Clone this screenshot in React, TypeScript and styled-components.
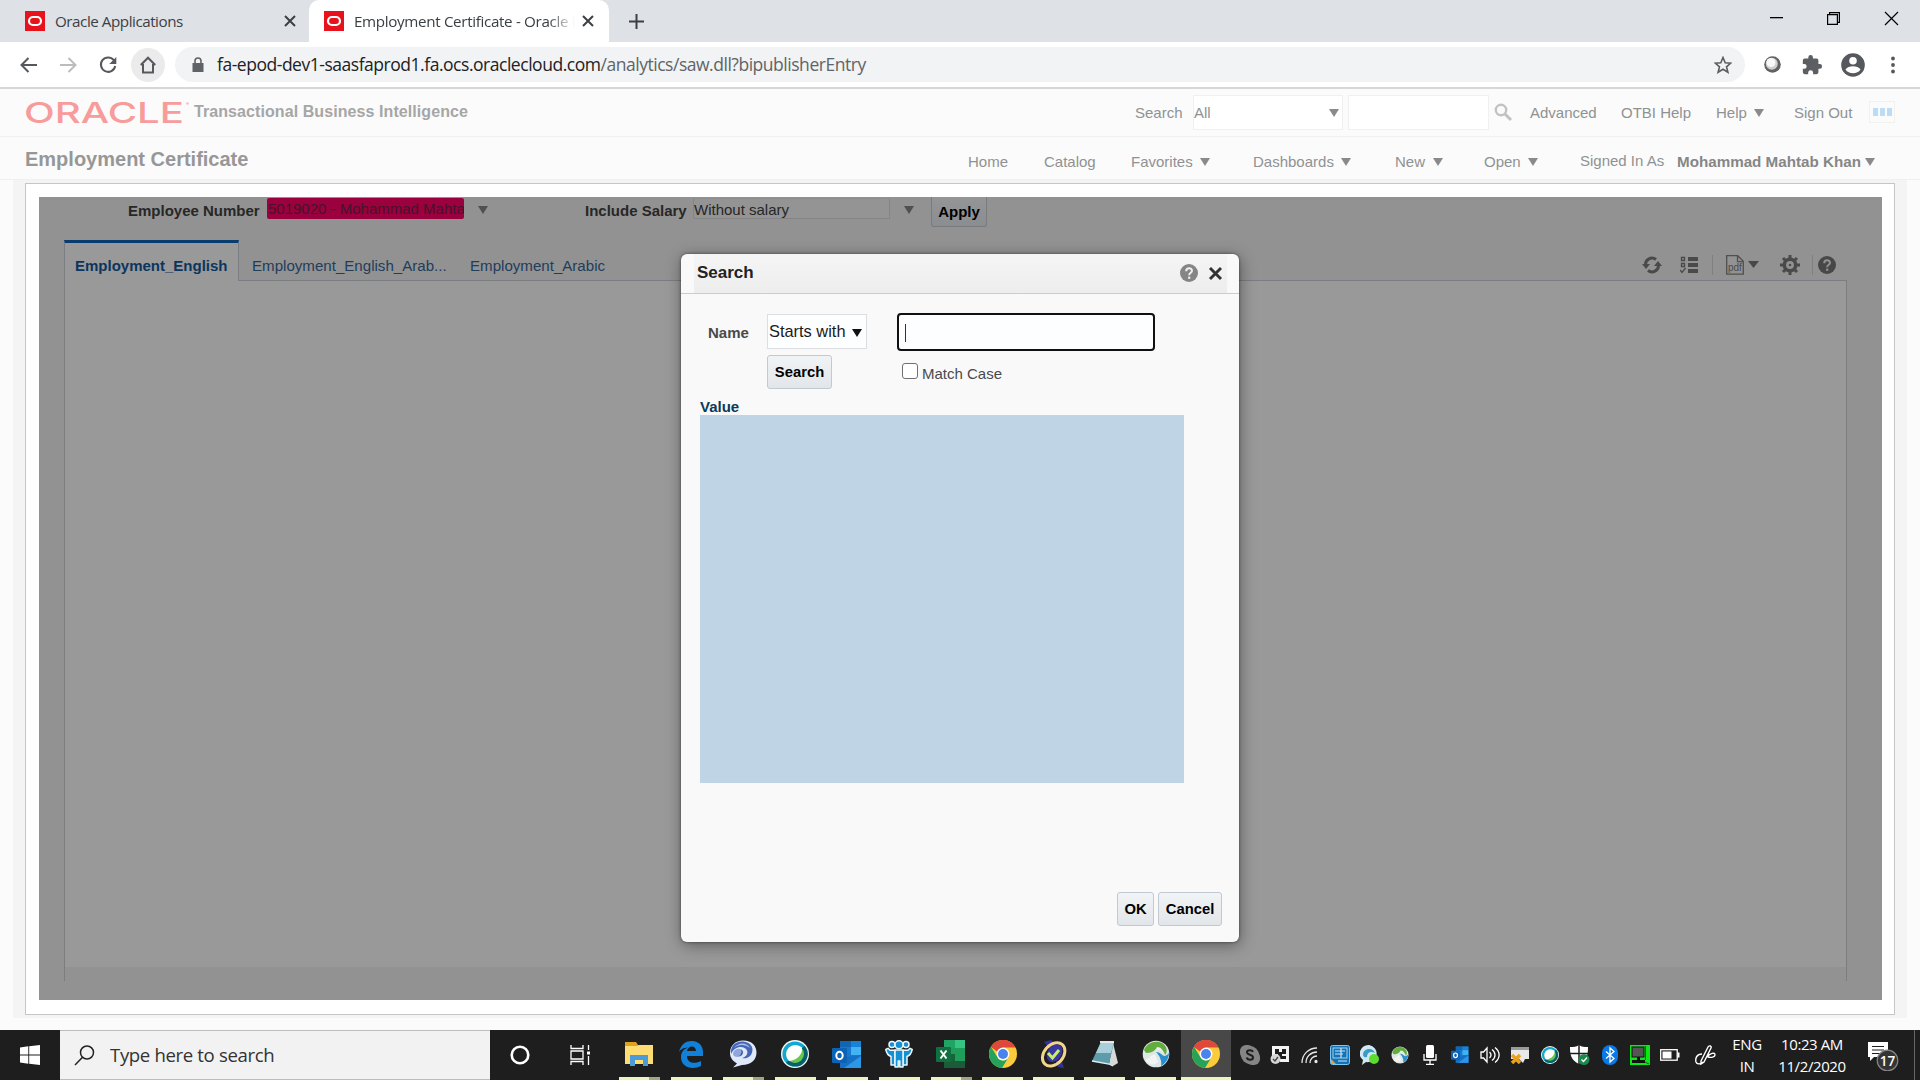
import React from "react";
import styled, { createGlobalStyle } from "styled-components";

const Global = createGlobalStyle`
  * { box-sizing: border-box; }
  body { margin: 0; background: #fafafa; overflow: hidden; }
  svg { display: block; flex: none; }
`;

const arial = `"Liberation Sans", Arial, sans-serif`;
const segoe = `"Open Sans", "Segoe UI", sans-serif`;

const Screen = styled.div`
  width: 1920px;
  height: 1080px;
  display: flex;
  flex-direction: column;
  position: relative;
  font-family: ${arial};
`;

/* ---------- generic slots ---------- */
const Slot = styled.div<{ $w: number; $center?: boolean }>`
  flex: 0 0 ${(p) => p.$w}px;
  width: ${(p) => p.$w}px;
  display: flex;
  align-items: center;
  justify-content: ${(p) => (p.$center ? "center" : "flex-start")};
  white-space: nowrap;
`;
const Spacer = styled.div`
  flex: 1;
`;

/* ---------- browser chrome ---------- */
const TabStrip = styled.div`
  height: 42px;
  flex: none;
  background: #dee1e6;
  display: flex;
  font-family: ${segoe};
`;
const Tab = styled.div<{ $active?: boolean; $w: number }>`
  width: ${(p) => p.$w}px;
  height: 42px;
  padding: 0 ${(p) => (p.$active ? 8 : 10)}px 0 ${(p) => (p.$active ? 15 : 25)}px;
  display: flex;
  align-items: center;
  background: ${(p) => (p.$active ? "#fff" : "transparent")};
  border-radius: 10px 10px 0 0;
`;
const TabTitle = styled.div<{ $fade?: boolean }>`
  margin-left: 10px;
  padding-bottom: 1px;
  flex: 1;
  overflow: hidden;
  white-space: nowrap;
  font-size: 15.2px;
  line-height: 22px;
  letter-spacing: ${(p) => (p.$fade ? -0.34 : -0.46)}px;
  color: #3c4043;
  ${(p) => p.$fade && "-webkit-mask-image: linear-gradient(90deg, #000 88%, transparent 100%);"}
`;
const WindowButtons = styled.div`
  display: flex;
  margin-left: auto;
  height: 36px;
  align-items: center;
`;
const Toolbar = styled.div`
  height: 47px;
  flex: none;
  background: #fff;
  border-bottom: 2px solid #d6d7d9;
  display: flex;
  align-items: center;
  padding: 0 8px 0 11px;
`;
const RoundButton = styled.div<{ $on?: boolean }>`
  width: 34px;
  height: 34px;
  margin-right: 6px;
  border-radius: 50%;
  background: ${(p) => (p.$on ? "#ebebec" : "transparent")};
  display: flex;
  align-items: center;
  justify-content: center;
`;
const Omnibox = styled.div`
  width: 1570px;
  height: 35px;
  margin-left: 4px;
  border-radius: 18px;
  background: #f1f3f4;
  display: flex;
  align-items: center;
  padding: 0 11px 0 15px;
`;
const Url = styled.div`
  font-family: ${segoe};
  font-size: 17.5px;
  letter-spacing: -0.47px;
  margin-left: 11px;
  padding-bottom: 1px;
  color: #606468;
  white-space: nowrap;
  span { color: #202124; }
`;

/* ---------- application header ---------- */
const Header = styled.div`
  height: 48px;
  flex: none;
  background: #fbfbfb;
  border-bottom: 1px solid #f0f0f0;
  display: flex;
  align-items: center;
  padding: 0 0 1px 25px;
  font-size: 15px;
  color: #8f9292;
`;
const SubHeader = styled(Header)`
  height: 43px;
  padding: 6px 0 0 25px;
`;
const Product = styled.div`
  margin-left: 4px;
  font-size: 16px;
  font-weight: bold;
  letter-spacing: 0.08px;
  color: #a6a6a6;
`;
const Title = styled.div`
  font-size: 20px;
  font-weight: bold;
  color: #979797;
  margin-top: -4px;
`;
const HeadBox = styled.div<{ $w: number }>`
  width: ${(p) => p.$w}px;
  height: 35px;
  margin-right: 5px;
  background: #fff;
  border: 1px solid #f0f0f0;
  display: flex;
  align-items: center;
  justify-content: space-between;
  padding: 0 3px 0 0;
`;
const UserName = styled.span`
  font-weight: bold;
  font-size: 15.2px;
  color: #868686;
`;
const Raised = styled.span`
  padding-bottom: 2px;
`;
const AppsBox = styled.div`
  width: 26px;
  height: 22px;
  border: 1px solid #f1f1ee;
  display: flex;
  align-items: center;
  justify-content: center;
  gap: 2px;
  i { width: 5px; height: 8px; background: #bcdcf5; }
`;
const Triangle = styled.span<{ $c: string; $s?: number; $drop?: number }>`
  width: 0;
  height: 0;
  margin-top: ${(p) => p.$drop ?? 2}px;
  border-left: ${(p) => p.$s ?? 5.5}px solid transparent;
  border-right: ${(p) => p.$s ?? 5.5}px solid transparent;
  border-top: 8px solid ${(p) => p.$c};
`;

/* ---------- page body ---------- */
const PageArea = styled.div`
  flex: 1;
  padding: 0 13px 12px;
  background: #fbfbfb;
`;
const PageInset = styled.div`
  height: 838px;
  padding: 3px 12px 3px;
  background: #f4f4f4;
`;
const Panel = styled.div`
  height: 832px;
  border: 1px solid #c6c6c6;
  background: #fff;
  padding: 13px 12px 0 13px;
`;
const Dimmed = styled.div`
  height: 803px;
  background: #929292;
  padding: 0 35px 0 25px;
  display: flex;
  flex-direction: column;
`;
const Prompts = styled.div`
  height: 43px;
  display: flex;
  align-items: flex-start;
  padding-left: 64px;
  font-size: 15px;
`;
const PromptLabel = styled.div<{ $w: number }>`
  width: ${(p) => p.$w}px;
  padding-top: 5px;
  line-height: 18px;
  font-weight: bold;
  color: #272727;
  white-space: nowrap;
`;
const PromptField = styled.div<{ $error?: boolean }>`
  width: 197px;
  height: 21px;
  margin-top: 1px;
  padding-left: ${(p) => (p.$error ? 1 : 0)}px;
  overflow: hidden;
  white-space: nowrap;
  line-height: ${(p) => (p.$error ? 22 : 21)}px;
  border-radius: 2px;
  border: ${(p) => (p.$error ? "0" : "1px solid #848484")};
  border-top-color: #8e8e8e;
  background: ${(p) => (p.$error ? "#9b003f" : "#949494")};
  color: ${(p) => (p.$error ? "#451527" : "#262626")};
`;
const PromptArrow = styled.div<{ $w: number }>`
  width: ${(p) => p.$w}px;
  padding: 9px 0 0 14px;
`;
const Apply = styled.div`
  width: 56px;
  height: 30px;
  border: 1px solid #797b7d;
  border-top: 0;
  border-radius: 0 0 3px 3px;
  background: linear-gradient(#939596, #8b8e91);
  text-align: center;
  line-height: 30px;
  font-weight: bold;
  color: #000;
`;
const TabsRow = styled.div`
  height: 41px;
  display: flex;
  align-items: flex-end;
`;
const ReportTab = styled.div<{ $active?: boolean; $w: number }>`
  width: ${(p) => p.$w}px;
  height: 41px;
  padding-left: ${(p) => (p.$active ? 10 : 13)}px;
  line-height: ${(p) => (p.$active ? 46 : 52)}px;
  font-size: ${(p) => (p.$active ? 15 : 15.1)}px;
  white-space: nowrap;
  font-weight: ${(p) => (p.$active ? "bold" : "normal")};
  color: ${(p) => (p.$active ? "#0b355e" : "#1f3d5c")};
  background: ${(p) => (p.$active ? "#999" : "transparent")};
  border: solid #7a7d82;
  border-width: ${(p) => (p.$active ? "3px 1px 0 1px" : "0 0 1px 0")};
  border-top-color: #083c6e;
`;
const ReportTools = styled.div`
  flex: 1;
  height: 41px;
  border-bottom: 1px solid #7a7d82;
  display: flex;
  align-items: center;
  justify-content: flex-end;
  padding: 10px 7px 0 0;
`;
const Divider = styled.div`
  width: 1px;
  height: 20px;
  background: #808080;
`;
const ReportBody = styled.div`
  height: 700px;
  border: solid #7d7d7d;
  border-width: 0 1px;
  background: linear-gradient(#999 686px, #929292 686px);
`;

/* ---------- dialog ---------- */
const Dialog = styled.div`
  position: absolute;
  left: 681px;
  top: 254px;
  width: 558px;
  height: 688px;
  background: #f9f9f9;
  border-radius: 6px;
  box-shadow: 0 0 3px rgba(0, 0, 0, 0.5), 1px 3px 16px rgba(0, 0, 0, 0.4);
  display: flex;
  flex-direction: column;
`;
const DialogHead = styled.div`
  height: 40px;
  padding: 0 12px 0 13px;
  border-bottom: 1px solid #ccc;
`;
const DialogHeadFill = styled.div`
  height: 39px;
  background: linear-gradient(#f5f5f5, #ededed);
  display: flex;
  align-items: center;
  padding: 0 0 1px 3px;
  font-size: 17px;
  font-weight: bold;
  color: #222;
`;
const DialogBody = styled.div`
  flex: 1;
  padding: 19px 17px 16px 19px;
  display: flex;
  flex-direction: column;
`;
const FormRow = styled.div`
  height: 42px;
  display: flex;
  align-items: flex-start;
`;
const Label = styled.div<{ $w: number }>`
  width: ${(p) => p.$w}px;
  padding: 11px 0 0 8px;
  font-size: 15px;
  line-height: 18px;
  font-weight: bold;
  color: #4a4a4a;
`;
const Select = styled.div`
  width: 100px;
  height: 35px;
  margin: 1px 30px 0 0;
  padding: 0 4px 0 1px;
  border: 1px solid #dcdfe2;
  background: #fdfeff;
  display: flex;
  align-items: center;
  justify-content: space-between;
  font-size: 16.4px;
  color: #1a1a1a;
`;
const Input = styled.div`
  width: 258px;
  height: 38px;
  border: 2px solid #101010;
  border-radius: 4px;
  background: #fdfeff;
  padding: 9px 0 0 6px;
  i { display: block; width: 1px; height: 18px; background: #333; }
`;
const Button = styled.div<{ $w: number }>`
  width: ${(p) => p.$w}px;
  height: 34px;
  border: 1px solid #c3c9d0;
  border-radius: 3px;
  background: linear-gradient(#f1f4f6, #e2e6ea);
  display: flex;
  align-items: center;
  justify-content: center;
  font-size: 14.8px;
  font-weight: bold;
  color: #000;
`;
const Checkbox = styled.div`
  width: 16px;
  height: 16px;
  margin: 8px 4px 0 70px;
  border: 1px solid #707070;
  border-radius: 3px;
  background: #fff;
`;
const CheckLabel = styled.div`
  padding-top: 10px;
  font-size: 15px;
  line-height: 18px;
  color: #4a4a4a;
`;
const ListTitle = styled.div`
  height: 18px;
  line-height: 20px;
  font-size: 15px;
  font-weight: bold;
  color: #0b3a5b;
`;
const List = styled.div`
  width: 484px;
  height: 368px;
  background: #bfd4e4;
`;
const Footer = styled.div`
  margin-top: auto;
  display: flex;
  justify-content: flex-end;
  gap: 4px;
`;

/* ---------- taskbar ---------- */
const Taskbar = styled.div`
  height: 50px;
  flex: none;
  background: #1e1e1e;
  display: flex;
  color: #fff;
  font-family: ${segoe};
`;
const SearchBox = styled.div`
  width: 430px;
  height: 50px;
  background: #f2f2f2;
  border: solid #bdbdbd;
  border-width: 1px 0;
  display: flex;
  align-items: center;
  padding-left: 14px;
  color: #333;
  font-size: 18.6px;
  letter-spacing: -0.36px;
`;
const SearchText = styled.span`
  margin-left: 15px;
  padding-bottom: 1px;
`;
const TaskButton = styled.div<{ $on?: boolean; $w: number }>`
  width: ${(p) => p.$w}px;
  height: 50px;
  display: flex;
  flex-direction: column;
  align-items: center;
  justify-content: space-between;
  padding-top: 10px;
  background: ${(p) => (p.$on ? "#484848" : "transparent")};
`;
const Underline = styled.div<{ $w: number; $multi?: boolean }>`
  width: ${(p) => p.$w}px;
  height: 3px;
  background: ${(p) => (p.$multi ? "linear-gradient(90deg,#e9f5bd 30px,#9fa686 30px)" : "#e9f5bd")};
`;
const Tray = styled.div`
  display: flex;
  align-items: center;
  margin-left: 4px;
`;
const TrayText = styled.div<{ $w: number; $ls: number }>`
  width: ${(p) => p.$w}px;
  text-align: center;
  font-size: 15px;
  line-height: 22px;
  letter-spacing: ${(p) => p.$ls}px;
`;
const ShowDesktop = styled.div`
  width: 6px;
  height: 50px;
  border-left: 1px solid #666;
  margin-left: auto;
`;

/* ---------- drawings ---------- */
const OracleFav = () => (
  <svg width="20" height="20" viewBox="0 0 20 20">
    <rect width="20" height="20" fill="#e8121c" />
    <rect x="4" y="6" width="12" height="8" rx="4" fill="none" stroke="#fff" strokeWidth="2.2" />
  </svg>
);
const Cross = ({ s = 10, c = "#3c4043", w = 2 }: { s?: number; c?: string; w?: number }) => (
  <svg width={s} height={s} viewBox="0 0 10 10" overflow="visible">
    <path d="M0 0L10 10M10 0L0 10" stroke={c} strokeWidth={w} />
  </svg>
);
const Help = ({ c, q, s = 18 }: { c: string; q: string; s?: number }) => (
  <svg width={s} height={s} viewBox="0 0 18 18">
    <circle cx="9" cy="9" r="9" fill={c} />
    <path d="M6.2 7.2C6.2 3.2 12 3.4 12 6.8C12 8.8 9.2 8.8 9.2 11.2" fill="none" stroke={q} strokeWidth="2" />
    <rect x="8.1" y="12.6" width="2.2" height="2.2" fill={q} />
  </svg>
);
const OracleLogo = () => (
  <svg width="165" height="36" viewBox="0 0 165 36" overflow="visible">
    <text x="-1" y="28.5" fontFamily="Inter, sans-serif" fontWeight="500" fontSize="29" fill="#f89b9b" textLength="160" lengthAdjust="spacingAndGlyphs">ORACLE</text>
    <circle cx="162.500" cy="9.500" r="1.300" fill="#fbb" />
  </svg>
);
const Chrome = () => (
  <svg width="28" height="28" viewBox="0 0 28 28">
    <circle cx="14" cy="14" r="14" fill="#fbcb3b" />
    <path d="M14 14L1.900 7A14 14 0 0 1 26.100 7H14z" fill="#e0483b" />
    <path d="M14 0A14 14 0 0 1 26.500 7.600H14a6.400 6.400 0 0 0-6 4L2 6.800A14 14 0 0 1 14 0z" fill="#e0483b" />
    <path d="M2 6.800A14 14 0 0 0 13 28L19.500 17.200A6.400 6.400 0 0 1 8.400 17.200z" fill="#25a35a" />
    <circle cx="14" cy="14" r="6.400" fill="#fff" />
    <circle cx="14" cy="14" r="5" fill="#4a83ee" />
  </svg>
);
const Explorer = () => (
  <svg width="28" height="28" viewBox="0 0 28 28">
    <path d="M0 2h11l2 3h15v19H0z" fill="#e0a21a" />
    <path d="M0 6h12l2-1h14v19H0z" fill="#fddc73" />
    <path d="M5 26V15h18v11h-5v-6h-8v6z" fill="#4a9bd8" />
  </svg>
);
const Edge = () => (
  <svg width="26" height="28" viewBox="0 0 26 28">
    <path d="M1 12C3 4 8 1 14 1c7 0 11 5 11 11v4H9c0 8 9 8 14 5v5c-8 4-20 2-20-9 0-5 3-8 7-9.500C5 8 3 9 1 12zM9 11h9c0-6-8-6-9 0z" fill="#1180d8" fillRule="evenodd" />
  </svg>
);
const Bubble = () => (
  <svg width="28" height="28" viewBox="0 0 28 28">
    <path d="M14 .5C23 .5 27.500 6 27.500 12.500C27.500 20 22 25 13 25L4 27.500L8 23.500C4 21 1 18 1 13C1 6 6 .5 14 .5z" fill="#dfe9fa" />
    <path d="M2 14C1 5 8 1 14 1.500C21 2 25 7 23 12.500C22 17 17 19 13 18C18 17 20 12 17 9C13 5 5 7 2 14z" fill="#4566b8" />
    <path d="M5 8C9 2 18 2 21 8C16 4 9 4 5 8z" fill="#a9c0ee" />
    <path d="M4 14C4 9 12 7 14 11C15 14 12 17 9 17C6 17 4 16 4 14z" fill="#8ea8dc" />
    <path d="M12 10c3 1 2 6-2 6 3-2 3-4 2-6z" fill="#2b4a96" />
  </svg>
);
const Webex = ({ s = 28 }: { s?: number }) => (
  <svg width={s} height={s} viewBox="0 0 28 28">
    <circle cx="14" cy="14" r="14" fill="#f2fafa" />
    <circle cx="14" cy="14" r="12.600" fill="#10a9d4" />
    <path d="M14 26.600A12.600 12.600 0 0 0 23.500 5.700L5 22.800A12.600 12.600 0 0 0 14 26.600z" fill="#07606a" />
    <circle cx="14" cy="14" r="9" fill="#69c750" />
    <path d="M21 7.500C22 14 16 20.500 8 21A9 9 0 1 1 21 7.500z" fill="#fff" />
  </svg>
);
const Outlook = ({ s = 30 }: { s?: number }) => (
  <svg width={s} height={s} viewBox="0 0 30 30">
    <rect x="8" y="1" width="21" height="27" rx="1" fill="#1a78cc" />
    <rect x="8" y="1" width="11" height="6" fill="#1065b5" />
    <rect x="19" y="1" width="10" height="6" fill="#1683d8" />
    <rect x="19" y="7" width="10" height="8" fill="#42b3f2" />
    <path d="M8 18l21-3v13H8z" fill="#1470c4" />
    <path d="M29 16v12H12z" fill="#2c97e6" />
    <rect x="0" y="8" width="15" height="15" rx="1" fill="#0c62b4" />
    <ellipse cx="7.500" cy="15.500" rx="3.200" ry="3.800" fill="none" stroke="#fff" strokeWidth="2" />
  </svg>
);
const People = () => (
  <svg width="28" height="28" viewBox="0 0 28 28">
    <g fill="#1590d2" stroke="#eaf7fd" strokeWidth="1.500" strokeLinejoin="round">
      <circle cx="7" cy="4.500" r="3" />
      <circle cx="21" cy="4.500" r="3" />
      <path d="M.8 9.500L3 8.300l2 2H10V25H6V16.500C3 15.500 1.500 13 .8 9.500zM27.200 9.500L25 8.300l-2 2H18V25h4V16.500c3-1 4.500-3.500 5.200-7z" />
      <path d="M10 10h8v17h-3.200v-6h-1.600v6H10z" />
      <circle cx="14" cy="4.800" r="4" />
    </g>
  </svg>
);
const Excel = () => (
  <svg width="30" height="28" viewBox="0 0 30 28">
    <rect x="8" width="21" height="28" rx="1" fill="#1f9d5b" />
    <rect x="8" width="11" height="8" fill="#22a366" />
    <rect x="19" width="10" height="8" fill="#35c481" />
    <rect x="8" y="14" width="11" height="8" fill="#17633a" />
    <rect x="8" y="21" width="21" height="7" fill="#1a5c38" />
    <rect y="7" width="15" height="15" rx="1" fill="#10703f" />
    <path d="M4.500 10.500l6 8M10.500 10.500l-6 8" stroke="#fff" strokeWidth="2" />
  </svg>
);
const CheckDisc = () => (
  <svg width="28" height="28" viewBox="0 0 28 28">
    <path d="M4 2L11 0l6 5-6 5zM16 21l6 1 2 6-6-1z" fill="#35319a" />
    <ellipse cx="14" cy="14.500" rx="9.500" ry="13" transform="rotate(42 14 14)" fill="none" stroke="#f3d68c" strokeWidth="3" />
    <ellipse cx="14" cy="13" rx="7" ry="9.500" transform="rotate(35 14 14)" fill="#3a37a0" />
    <path d="M8 13l4.500 5L19 10" fill="none" stroke="#c7f06a" strokeWidth="3" />
  </svg>
);
const Notepad = () => (
  <svg width="28" height="28" viewBox="0 0 28 28">
    <path d="M22 3l5 20-5 3-4-2z" fill="#d5d9d8" />
    <path d="M10 2h13l-5 22L1 21z" fill="#5f9cab" />
    <path d="M10 2h13l-3 11L5 13z" fill="#a9d0da" />
    <path d="M9 2h14" stroke="#e8e8e8" strokeWidth="2" />
    <path d="M1 21l17 3 4 2" fill="none" stroke="#e3eef0" strokeWidth="1.300" />
  </svg>
);
const Globe = ({ s = 28 }: { s?: number }) => (
  <svg width={s} height={s} viewBox="0 0 28 28">
    <circle cx="14" cy="14" r="13.300" fill="#dfe6e6" />
    <path d="M2 10C5 2 14 0 20 3C25 6 26 12 23 15C22 10 18 8 14 9C11 12 8 13 4 13z" fill="#62ad3d" />
    <path d="M15 7c4 0 6 3 6 6-2-3-5-4-8-2z" fill="#e8f0ea" />
    <path d="M14 12c4 0 6 3 8 4 2 0 4-2 5-3 0 6-4 11-8 13 1-5-1-10-5-14z" fill="#2b8fce" />
    <path d="M3 20c4-1 6-5 10-6l3 8c-4 4-9 3-13-2z" fill="#f1f3f4" />
  </svg>
);

const tasks = [
  { icon: <Explorer />, multi: true },
  { icon: <Edge /> },
  { icon: <Bubble />, multi: true },
  { icon: <Webex /> },
  { icon: <Outlook /> },
  { icon: <People /> },
  { icon: <Excel />, multi: true },
  { icon: <Chrome /> },
  { icon: <CheckDisc /> },
  { icon: <Notepad /> },
  { icon: <Globe /> },
];

const trayIcons = [
  <svg width="20" height="20" viewBox="0 0 20 20">
    <rect width="14" height="14" rx="6" fill="#858585" />
    <rect x="6" y="6" width="14" height="14" rx="6" fill="#858585" />
    <circle cx="10" cy="10" r="9" fill="#858585" />
    <path d="M13 7C12 4.500 7 4.500 7 7.300C7 10.300 13 9.300 13 12.500C13 15.500 7.500 15.500 6.700 12.600" fill="none" stroke="#1e1e1e" strokeWidth="2" />
  </svg>,
  <svg width="20" height="20" viewBox="0 0 20 20">
    <path d="M2 1h17v16H10v-3h6v-3h-4V9h4V4h-4v3H9V4H5v5h3v2H2z" fill="#f4f4f4" />
    <circle cx="5.500" cy="14" r="5" fill="#d6d6d6" />
    <path d="M3 14l2 2 3-4" fill="none" stroke="#444" strokeWidth="1.300" />
  </svg>,
  <svg width="18" height="18" viewBox="0 0 18 18" fill="none" stroke="#e8e8e8" strokeWidth="1.300">
    <path d="M1 17C1 8 8 2 16 2M5 17C5 10.500 10 6 16 6M9 17c0-4 3-7 7-7" />
    <circle cx="15" cy="15.500" r="1" fill="#fff" />
  </svg>,
  <svg width="20" height="20" viewBox="0 0 20 20">
    <rect x=".5" y=".5" width="19" height="19" rx="2" fill="#1573b5" stroke="#7cc6f2" />
    <rect x="3" y="3" width="14" height="10" fill="none" stroke="#9fd4f2" />
    <path d="M5 6h10M5 9h8M11 3v10M8 16h9" stroke="#c8e8fa" strokeWidth="1.200" />
    <path d="M1 14l5 5H1z" fill="#e8a33c" />
  </svg>,
  <svg width="20" height="20" viewBox="0 0 20 20">
    <path d="M9 0a9 8.500 0 1 1-3 17l-4 3 1-5A9 8.500 0 0 1 9 0z" fill="#cfe8f4" />
    <path d="M3 9c1-6 10-7 12-1-4-2-8-1-8 4-3 1-4-1-4-3z" fill="#3a9bc4" />
    <circle cx="14" cy="14" r="5" fill="#5bdc2e" />
  </svg>,
  <Globe s={18} />,
  <svg width="14" height="20" viewBox="0 0 14 20">
    <rect x="3" y="0" width="8" height="13" rx="1.500" fill="#fff" />
    <path d="M1 9v6h12V9M7 15v4M3 19.300h8" fill="none" stroke="#fff" strokeWidth="1.300" />
  </svg>,
  <Outlook s={18} />,
  <svg width="20" height="18" viewBox="0 0 20 18" fill="none" stroke="#fff" strokeWidth="1.300">
    <path d="M1 6h2.500L7 2v14l-3.500-4H1zM9.500 6c2 2 2 4 0 6M12 3.500c4 3 4 8 0 11M15 1.500c5.500 4.500 5.500 10.500 0 15" />
  </svg>,
  <svg width="20" height="18" viewBox="0 0 20 18">
    <path d="M1 1h18v12h-4l-2 4-4-4H1z" fill="#e8e8e8" />
    <path d="M1 1h18v3H1z" fill="#9a9a9a" />
    <path d="M2 9l8 8M10 9l-8 8" stroke="#e9a21c" strokeWidth="3.500" />
  </svg>,
  <Webex s={18} />,
  <svg width="20" height="20" viewBox="0 0 20 20">
    <path d="M9 0c3 2 5 2 9 2 0 8-1 13-9 17C1 15 0 10 0 2c4 0 6 0 9-2z" fill="#fff" />
    <path d="M9 0v19M0 8.500h18" stroke="#1e1e1e" strokeWidth="1.500" />
    <circle cx="14" cy="14.500" r="5.500" fill="#1c8a4c" />
    <path d="M11.500 14.500l2 2 3.500-4" fill="none" stroke="#fff" strokeWidth="1.300" />
  </svg>,
  <svg width="16" height="20" viewBox="0 0 16 20">
    <rect width="16" height="20" rx="8" fill="#0a78e6" />
    <path d="M4 6.500l8 7-4 3.500V3l4 3.500-8 7" fill="none" stroke="#fff" strokeWidth="1.300" />
  </svg>,
  <svg width="20" height="20" viewBox="0 0 20 20">
    <rect width="20" height="20" fill="#0be817" />
    <rect x="2" y="2" width="12" height="10" fill="#555" stroke="#111" />
    <path d="M7 12h3v3h5v3H2v-3h5z" fill="#111" />
    <path d="M15.500 1v14M15 17l4 2" stroke="#086b0c" />
  </svg>,
  <svg width="20" height="12" viewBox="0 0 20 12">
    <rect x=".7" y=".7" width="16.500" height="10.500" fill="none" stroke="#fff" strokeWidth="1.300" />
    <rect x="2.500" y="2.500" width="9" height="7" fill="#fff" />
    <rect x="17.500" y="3.500" width="2" height="5" fill="#fff" />
  </svg>,
];

const navItems: { label: string; w: number; menu?: boolean }[] = [
  { label: "Home", w: 76 },
  { label: "Catalog", w: 87 },
  { label: "Favorites", w: 122, menu: true },
  { label: "Dashboards", w: 142, menu: true },
  { label: "New", w: 89, menu: true },
  { label: "Open", w: 96, menu: true },
];

const MenuText = styled.span`
  margin-right: 7.5px;
`;

export default function App() {
  return (
    <Screen>
      <Global />
      <TabStrip>
        <Tab $w={309}>
          <OracleFav />
          <TabTitle>Oracle Applications</TabTitle>
          <Slot $w={14}><Cross /></Slot>
        </Tab>
        <Tab $active $w={300}>
          <OracleFav />
          <TabTitle $fade>Employment Certificate - Oracle BI</TabTitle>
          <Slot $w={26} $center><Cross /></Slot>
        </Tab>
        <Slot $w={54} $center>
          <svg width="15" height="15" viewBox="0 0 15 15"><path d="M7.500 0v15M0 7.500h15" stroke="#3c4043" strokeWidth="2" /></svg>
        </Slot>
        <WindowButtons>
          <Slot $w={57} $center><svg width="13" height="2"><rect width="13" height="1.300" /></svg></Slot>
          <Slot $w={57} $center>
            <svg width="13" height="13" viewBox="0 0 13 13" fill="none" stroke="#000" strokeWidth="1.200"><path d="M.6 2.600h9.800v9.800H.6zM2.600 2.600V.6h9.800v9.800h-2" /></svg>
          </Slot>
          <Slot $w={58} $center><Cross s={13} c="#000" w={0.9} /></Slot>
        </WindowButtons>
      </TabStrip>

      <Toolbar>
        <RoundButton>
          <svg width="17" height="16" viewBox="0 0 17 16" fill="none" stroke="#55585c" strokeWidth="2"><path d="M8.500 1L1.500 8l7 7M1.500 8H17" /></svg>
        </RoundButton>
        <RoundButton>
          <svg width="17" height="16" viewBox="0 0 17 16" fill="none" stroke="#babcbe" strokeWidth="2"><path d="M8.500 1l7 7-7 7M15.500 8H0" /></svg>
        </RoundButton>
        <RoundButton>
          <svg width="18" height="18" viewBox="0 0 18 18"><path d="M14.800 4.200A7.200 7.200 0 1 0 16.200 10" fill="none" stroke="#55585c" strokeWidth="2" /><path d="M17.300 1v7h-7z" fill="#55585c" /></svg>
        </RoundButton>
        <RoundButton $on>
          <svg width="16" height="18" viewBox="0 0 16 18" fill="none" stroke="#55585c" strokeWidth="2"><path d="M.8 9L8 1.700 15.200 9M3 8v8.500h10V8" /></svg>
        </RoundButton>
        <Omnibox>
          <svg width="16" height="16" viewBox="0 0 16 16"><path d="M2.500 6h11v9h-11z" fill="#5f6368" /><path d="M5 6V4a3 3 0 0 1 6 0v2" fill="none" stroke="#5f6368" strokeWidth="1.600" /></svg>
          <Url><span>fa-epod-dev1-saasfaprod1.fa.ocs.oraclecloud.com</span>/analytics/saw.dll?bipublisherEntry</Url>
          <Spacer />
          <Slot $w={22} $center>
            <svg width="18" height="18" viewBox="0 0 18 18"><path d="M9 1.500l2.200 5.200 5.600.4-4.300 3.700 1.400 5.500L9 13.300l-4.900 3 1.400-5.500L1.200 7.100l5.600-.4z" fill="none" stroke="#5a5d61" strokeWidth="1.600" /></svg>
          </Slot>
        </Omnibox>
        <Slot $w={55} $center>
          <svg width="17" height="17" viewBox="0 0 17 17"><circle cx="8.500" cy="8.500" r="8.300" fill="#626262" /><circle cx="7.800" cy="7.800" r="6" fill="#cfcfcf" /><circle cx="7" cy="6.500" r="4.500" fill="#f8f8f8" /></svg>
        </Slot>
        <Slot $w={24} $center>
          <svg width="22" height="22" viewBox="0 0 24 24"><path d="M20.500 11H19V7a2 2 0 0 0-2-2h-4V3.500a2.500 2.500 0 0 0-5 0V5H4a2 2 0 0 0-2 2v3.800h1.500a2.700 2.700 0 0 1 0 5.400H2V20a2 2 0 0 0 2 2h3.800v-1.500a2.700 2.700 0 0 1 5.400 0V22H17a2 2 0 0 0 2-2v-4h1.500a2.500 2.500 0 0 0 0-5z" fill="#5b5e62" /></svg>
        </Slot>
        <Slot $w={58} $center>
          <svg width="24" height="24" viewBox="0 0 24 24"><circle cx="12" cy="12" r="11.800" fill="#55585d" /><circle cx="12" cy="7.800" r="3.800" fill="#fff" /><path d="M4.500 16.500c3-4.300 12-4.300 15 0-3 5-12 5-15 0z" fill="#fff" /></svg>
        </Slot>
        <Slot $w={22} $center>
          <svg width="4" height="18" viewBox="0 0 4 18" fill="#55585d"><circle cx="2" cy="2.500" r="1.900" /><circle cx="2" cy="9" r="1.900" /><circle cx="2" cy="15.500" r="1.900" /></svg>
        </Slot>
      </Toolbar>

      <Header>
        <OracleLogo />
        <Product>Transactional Business Intelligence</Product>
        <Spacer />
        <Slot $w={58}>Search</Slot>
        <HeadBox $w={150}>All<Triangle $c="#8a8a8a" /></HeadBox>
        <HeadBox $w={141} />
        <Slot $w={36}>
          <svg width="19" height="19" viewBox="0 0 19 19" fill="none" stroke="#c2c2c2"><circle cx="7" cy="7" r="5.200" strokeWidth="2.400" /><path d="M11 11l6 6" strokeWidth="3" /></svg>
        </Slot>
        <Slot $w={91}>Advanced</Slot>
        <Slot $w={95}>OTBI Help</Slot>
        <Slot $w={78}><MenuText>Help</MenuText><Triangle $c="#8a8a8a" /></Slot>
        <Slot $w={75}>Sign Out</Slot>
        <Slot $w={51}><AppsBox><i /><i /><i /></AppsBox></Slot>
      </Header>
      <SubHeader>
        <Title>Employment Certificate</Title>
        <Spacer />
        {navItems.map((n) => (
          <Slot key={n.label} $w={n.w}>
            <MenuText>{n.label}</MenuText>
            {n.menu && <Triangle $c="#8a8a8a" />}
          </Slot>
        ))}
        <Slot $w={97}><Raised>Signed In As</Raised></Slot>
        <Slot $w={188}><UserName>Mohammad Mahtab Khan</UserName></Slot>
        <Slot $w={55}><Triangle $c="#8a8a8a" /></Slot>
      </SubHeader>

      <PageArea>
        <PageInset>
          <Panel>
            <Dimmed>
              <Prompts>
                <PromptLabel $w={139}>Employee Number</PromptLabel>
                <PromptField $error>5019020 - Mohammad Mahta</PromptField>
                <PromptArrow $w={121}><Triangle as="div" $drop={0} $c="#505050" /></PromptArrow>
                <PromptLabel $w={108}>Include Salary</PromptLabel>
                <PromptField>Without salary</PromptField>
                <PromptArrow $w={41}><Triangle as="div" $drop={0} $c="#505050" /></PromptArrow>
                <Apply>Apply</Apply>
              </Prompts>
              <TabsRow>
                <ReportTab $active $w={175}>Employment_English</ReportTab>
                <ReportTab $w={218}>Employment_English_Arab...</ReportTab>
                <ReportTab $w={180}>Employment_Arabic</ReportTab>
                <ReportTools>
                  <Slot $w={38}>
                    <svg width="20" height="18" viewBox="0 0 20 18"><path d="M3.500 9A6.500 6.500 0 0 1 14 3.500M16.500 9A6.500 6.500 0 0 1 6 14.500" fill="none" stroke="#4a4a4a" strokeWidth="3" /><path d="M0 8h8l-4 5zM20 10h-8l4-5z" fill="#4a4a4a" /></svg>
                  </Slot>
                  <Slot $w={32}>
                    <svg width="18" height="18" viewBox="0 0 18 18" fill="#4a4a4a"><path d="M8 1h10v4H8zM8 7h10v4H8zM8 13h10v4H8z" /><path d="M1.500 1.500h3v3h-3zM1.500 7.500h3v3h-3zM0 14l2 2.500L5.500 12" fill="none" stroke="#4a4a4a" strokeWidth="1.300" /></svg>
                  </Slot>
                  <Divider />
                  <Slot $w={13} />
                  <Slot $w={54}>
                    <svg width="36" height="20" viewBox="0 0 36 20">
                      <path d="M.7.700h11l5.600 5.500v13H.7zM11.500.700v6h6" fill="none" stroke="#505050" strokeWidth="1.300" />
                      <text x="2" y="16" fontSize="10" fontFamily="Liberation Sans, sans-serif" fill="#4a4a4a">pdf</text>
                      <path d="M22 6h11l-5.500 7z" fill="#484848" />
                    </svg>
                  </Slot>
                  <Slot $w={32}>
                    <svg width="20" height="20" viewBox="0 0 20 20"><circle cx="10" cy="10" r="5.700" fill="none" stroke="#4a4a4a" strokeWidth="3.600" /><path d="M10 0v4M10 16v4M0 10h4M16 10h4M3 3l3 3M14 14l3 3M17 3l-3 3M6 14l-3 3" stroke="#4a4a4a" strokeWidth="3" /><circle cx="10" cy="10" r="1.300" fill="#4a4a4a" /></svg>
                  </Slot>
                  <Divider />
                  <Slot $w={27} $center><Help c="#484848" q="#929292" /></Slot>
                </ReportTools>
              </TabsRow>
              <ReportBody />
            </Dimmed>
          </Panel>
        </PageInset>
      </PageArea>

      <Taskbar>
        <Slot $w={60} $center>
          <svg width="20" height="20" viewBox="0 0 20 20" fill="#fff"><path d="M0 2.500l8.300-1.200v8.200H0zM9.200 1.200L20 0v9.500H9.200zM0 10.500h8.300v8.200L0 17.500zM9.200 10.500H20V20L9.200 18.800z" /></svg>
        </Slot>
        <SearchBox>
          <svg width="21" height="21" viewBox="0 0 21 21" fill="none" stroke="#222" strokeWidth="1.500"><circle cx="13" cy="7.500" r="6.500" /><path d="M8.500 12.300L1 20" /></svg>
          <SearchText>Type here to search</SearchText>
        </SearchBox>
        <Slot $w={60} $center>
          <svg width="20" height="20" viewBox="0 0 20 20"><circle cx="10" cy="10" r="8.300" fill="none" stroke="#fff" strokeWidth="2.600" /></svg>
        </Slot>
        <Slot $w={60} $center>
          <svg width="21" height="20" viewBox="0 0 21 20" fill="none" stroke="#fff" strokeWidth="1.300"><path d="M1 0v3.500h12V0M1 20v-3.500h12V20M1 6h12v8H1zM18.500 0v5M18.500 11v9" /><rect x="17" y="6.500" width="3" height="3" fill="#fff" stroke="none" /></svg>
        </Slot>
        <Slot $w={3} />
        {tasks.map((t, i) => (
          <TaskButton key={i} $w={i < 7 ? 52 : 51}>
            {t.icon}
            <Underline $w={41} $multi={t.multi} />
          </TaskButton>
        ))}
        <TaskButton $on $w={50}><Chrome /><Underline $w={50} /></TaskButton>
        <Tray>
          {trayIcons.map((icon, i) => (
            <Slot key={i} $w={30} $center>{icon}</Slot>
          ))}
          <Slot $w={40} $center>
            <svg width="21" height="20" viewBox="0 0 21 20" fill="none" stroke="#fff" strokeWidth="1.400"><path d="M6 16L13 2c1-2 4-1 3 1L9 17l-3 2zM7 9C2 9 0 13 1 17c1 3 5 2 7 0M12 12c3-4 8-5 8-2 0 2-4 3-7 2" /></svg>
          </Slot>
          <TrayText $w={44} $ls={-0.4}>ENG<br />IN</TrayText>
          <TrayText $w={86} $ls={-0.4}>10:23 AM<br />11/2/2020</TrayText>
          <Slot $w={54} $center>
            <svg width="34" height="32" viewBox="0 0 34 32">
              <path d="M3 3h20v15H9l-4 4v-4H3z" fill="#fff" />
              <path d="M7 7.500h12M7 11h12M7 14.500h8" stroke="#1e1e1e" strokeWidth="1.200" />
              <circle cx="22.500" cy="21.500" r="10.300" fill="#343434" stroke="#858585" strokeWidth="1.200" />
              <text x="22.500" y="26.500" fontSize="13.500" fontWeight="600" textAnchor="middle" fill="#fff" fontFamily="Open Sans, sans-serif">17</text>
            </svg>
          </Slot>
        </Tray>
        <ShowDesktop />
      </Taskbar>

      <Dialog>
        <DialogHead>
          <DialogHeadFill>
            Search
            <Spacer />
            <Help c="#858585" q="#eee" />
            <Slot $w={6} />
            <Slot $w={23} $center><Cross c="#333" s={11} w={2.600} /></Slot>
          </DialogHeadFill>
        </DialogHead>
        <DialogBody>
          <FormRow>
            <Label $w={67}>Name</Label>
            <Select>Starts with<Triangle $c="#111" $drop={3} /></Select>
            <Input><i /></Input>
          </FormRow>
          <FormRow>
            <Slot $w={67} />
            <Button $w={65}>Search</Button>
            <Checkbox />
            <CheckLabel>Match Case</CheckLabel>
          </FormRow>
          <ListTitle>Value</ListTitle>
          <List />
          <Footer>
            <Button $w={37}>OK</Button>
            <Button $w={64}>Cancel</Button>
          </Footer>
        </DialogBody>
      </Dialog>
    </Screen>
  );
}
